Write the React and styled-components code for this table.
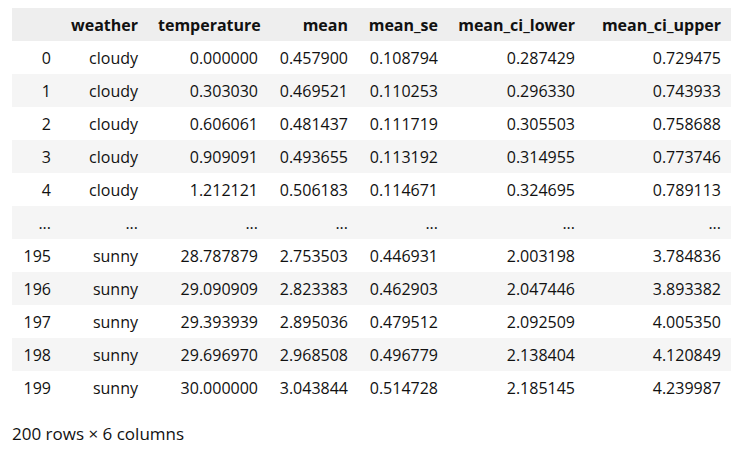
import styled, { createGlobalStyle } from "styled-components";

const GlobalStyle = createGlobalStyle`
  body {
    margin: 0;
    background: #ffffff;
    font-family: "Open Sans", "Noto Sans", sans-serif;
    color: #111111;
  }
`;

const Frame = styled.div`
  padding: 8px 11px 0 12px;
`;

const DataTable = styled.table`
  border-collapse: collapse;
  border-spacing: 0;
  table-layout: fixed;
  width: 719px;
  font-size: 16px;

  tbody tr:nth-child(even) {
    background: #f5f5f5;
  }
`;

const Col = styled.col`
  width: ${(p) => p.$w}px;
`;

const HeadRow = styled.tr`
  background: #eeeeee;
`;

const HeadCell = styled.th`
  height: 33px;
  padding: 0 10px;
  text-align: right;
  font-weight: 700;
  white-space: nowrap;
`;

const Cell = styled.td`
  height: 33px;
  padding: 0 10px;
  text-align: right;
  white-space: nowrap;
`;

const Footer = styled.p`
  margin: 19px 0 0;
  font-size: 17px;
  line-height: 22px;
`;

const widths = [49, 87, 120, 90, 90, 137, 146];
const columns = ["weather", "temperature", "mean", "mean_se", "mean_ci_lower", "mean_ci_upper"];

const rows = [
  ["0", "cloudy", "0.000000", "0.457900", "0.108794", "0.287429", "0.729475"],
  ["1", "cloudy", "0.303030", "0.469521", "0.110253", "0.296330", "0.743933"],
  ["2", "cloudy", "0.606061", "0.481437", "0.111719", "0.305503", "0.758688"],
  ["3", "cloudy", "0.909091", "0.493655", "0.113192", "0.314955", "0.773746"],
  ["4", "cloudy", "1.212121", "0.506183", "0.114671", "0.324695", "0.789113"],
  ["...", "...", "...", "...", "...", "...", "..."],
  ["195", "sunny", "28.787879", "2.753503", "0.446931", "2.003198", "3.784836"],
  ["196", "sunny", "29.090909", "2.823383", "0.462903", "2.047446", "3.893382"],
  ["197", "sunny", "29.393939", "2.895036", "0.479512", "2.092509", "4.005350"],
  ["198", "sunny", "29.696970", "2.968508", "0.496779", "2.138404", "4.120849"],
  ["199", "sunny", "30.000000", "3.043844", "0.514728", "2.185145", "4.239987"],
];

export default function App() {
  return (
    <>
      <GlobalStyle />
      <Frame>
        <DataTable>
          <colgroup>
            {widths.map((w, i) => (
              <Col key={i} $w={w} />
            ))}
          </colgroup>
          <thead>
            <HeadRow>
              <HeadCell />
              {columns.map((c) => (
                <HeadCell key={c}>{c}</HeadCell>
              ))}
            </HeadRow>
          </thead>
          <tbody>
            {rows.map((r, i) => (
              <tr key={i}>
                {r.map((v, j) => (
                  <Cell key={j}>{v}</Cell>
                ))}
              </tr>
            ))}
          </tbody>
        </DataTable>
        <Footer>200 rows × 6 columns</Footer>
      </Frame>
    </>
  );
}
